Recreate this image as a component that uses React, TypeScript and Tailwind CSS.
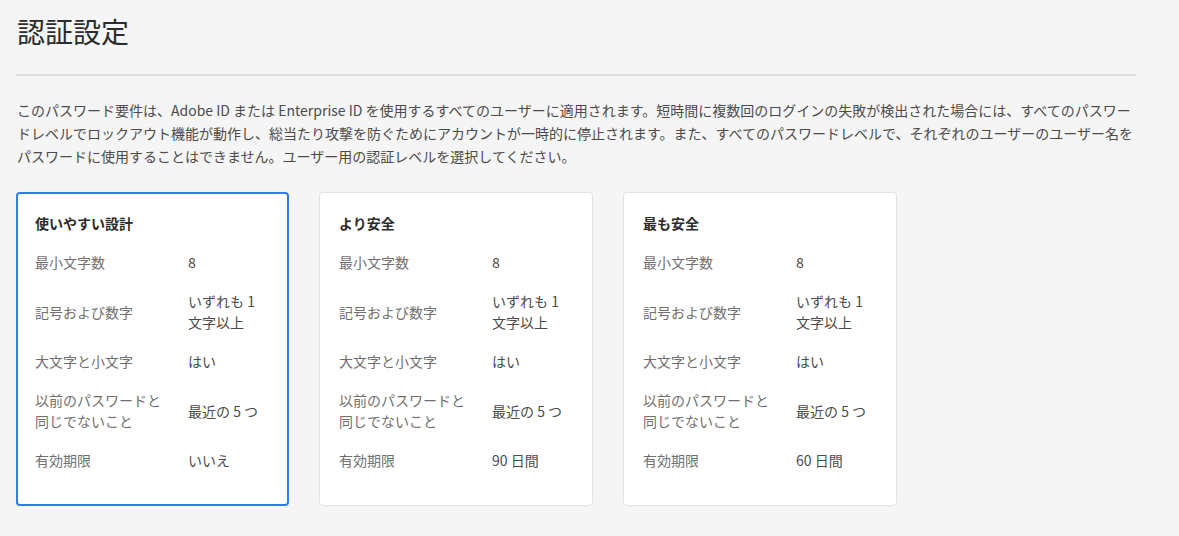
import React from 'react';

type Level = {
  title: string;
  expiry: string;
  selected?: boolean;
};

const levels: Level[] = [
  { title: '使いやすい設計', expiry: 'いいえ', selected: true },
  { title: 'より安全', expiry: '90 日間' },
  { title: '最も安全', expiry: '60 日間' },
];

const LevelCard: React.FC<{ level: Level }> = ({ level }) => {
  const rows: [string, string][] = [
    ['最小文字数', '8'],
    ['記号および数字', 'いずれも 1 文字以上'],
    ['大文字と小文字', 'はい'],
    ['以前のパスワードと同じでないこと', '最近の 5 つ'],
    ['有効期限', level.expiry],
  ];

  return (
    <div
      className={
        level.selected
          ? 'w-[273px] h-[314px] bg-white rounded-[4px] border-2 border-[#2d7fe0] pt-[19px] pl-[17px] pr-[16px]'
          : 'w-[274px] h-[314px] bg-white rounded-[4px] border border-[#e3e3e3] pt-[20px] pl-[19px] pr-[17px]'
      }
    >
      <h3 className="text-[14px] leading-[20px] font-bold text-[#2c2c2c]">{level.title}</h3>
      <div className="mt-[19px] flex flex-col gap-[18px]">
        {rows.map(([label, value]) => (
          <div key={label} className="grid grid-cols-[136px_1fr] gap-x-[17px] items-center text-[14px] leading-[21px]">
            <span className="text-[#707070]">{label}</span>
            <span className="text-[#4b4b4b]">{value}</span>
          </div>
        ))}
      </div>
    </div>
  );
};

const App: React.FC = () => {
  return (
    <div
      className="min-h-screen bg-[#f5f5f5] pl-[16px] pt-[10px] pb-8"
      style={{ fontFamily: '"Noto Sans CJK JP", "Noto Sans", sans-serif' }}
    >
      <div className="w-[1120px]">
        <h1 className="text-[28px] leading-[42px] font-normal text-[#2c2c2c] pl-[1px]">認証設定</h1>
        <div className="mt-[22px] h-[2px] bg-[#dedede]" />
        <p className="mt-[23px] text-[14px] leading-[23px] text-[#4b4b4b] pl-[1px]">
          このパスワード要件は、Adobe ID または Enterprise ID を使用するすべてのユーザーに適用されます。短時間に複数回のログインの失敗が検出された場合には、すべてのパスワードレベルでロックアウト機能が動作し、総当たり攻撃を防ぐためにアカウントが一時的に停止されます。また、すべてのパスワードレベルで、それぞれのユーザーのユーザー名をパスワードに使用することはできません。ユーザー用の認証レベルを選択してください。
        </p>
        <div className="mt-[24px] flex gap-[30px]">
          {levels.map(l => (
            <LevelCard key={l.title} level={l} />
          ))}
        </div>
      </div>
    </div>
  );
};

export default App;
